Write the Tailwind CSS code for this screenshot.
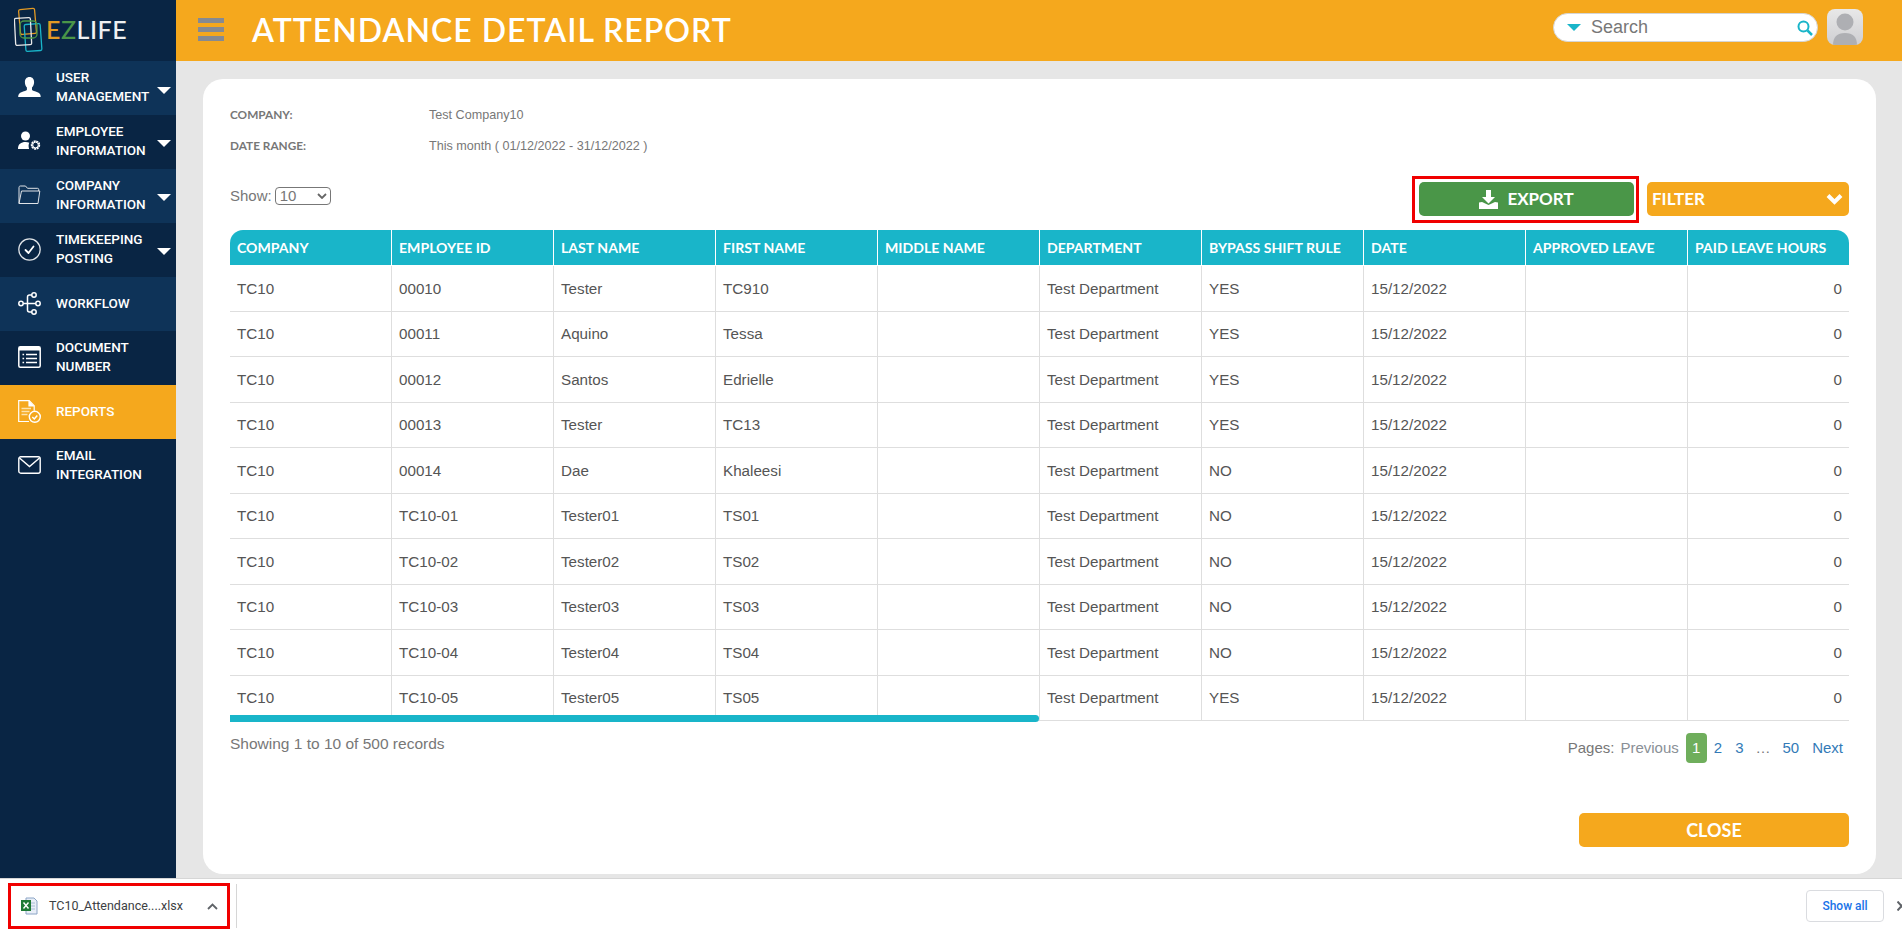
<!DOCTYPE html>
<html lang="en">
<head>
  <meta charset="UTF-8" />
  <title>Attendance Detail Report</title>
  <script src="https://cdn.jsdelivr.net/npm/@tailwindcss/browser@4"></script>
</head>
<body class="h-screen overflow-hidden flex flex-col bg-white font-['Liberation_Sans',sans-serif]">

  <div class="flex h-[878px]">
    <!-- Sidebar -->
    <aside class="w-[176px] shrink-0 bg-[#092544] text-white font-['Roboto',sans-serif] font-medium text-[13.500px] leading-[19px]">
      <div class="h-[61px] flex items-center pl-[14px] pb-[2px]">
        <svg class="w-[30px] h-[46px] shrink-0" viewBox="0 0 30 46" fill="none" stroke-width="1.3">
          <rect x="5.5" y="2" width="16" height="25" rx="1.5" stroke="#e39a24" transform="rotate(-5 13 14)" />
          <rect x="11" y="17" width="16" height="27" rx="1.5" stroke="#19b5c9" transform="rotate(-4 19 30)" />
          <rect x="1" y="11" width="16" height="27" rx="1.5" stroke="#e8e8e8" transform="rotate(-3 9 24)" />
          <rect x="6" y="14" width="17" height="17" rx="4" stroke="#4a9648" />
        </svg>
        <span class="ml-[2px] font-['Lato',sans-serif] text-[25px] leading-none tracking-[0.5px] font-medium"><span class="text-[#e39a24]">E</span><span class="text-[#4a9648]">Z</span><span class="text-[#eef0f2]">LIFE</span></span>
      </div>
      <nav>
        <a class="h-[54px] pb-[2px] flex items-center bg-[#0e3358] relative">
          <span class="w-[56px] shrink-0 pl-[18px]">
            <svg class="w-[23px] h-[23px]" viewBox="0 0 23 23" fill="#fff"><path d="M11.5 1c3 0 4.600 2.200 4.600 5.200 0 2.200-.9 4.200-2.100 5.300v2.300c0 1 5.500 2 7.500 3.700.9.800 1.200 2.300 1.200 3.500H.2c0-1.200.3-2.700 1.200-3.500 2-1.700 7.500-2.700 7.500-3.700v-2.300C7.700 10.400 6.900 8.400 6.900 6.200 6.900 3.200 8.500 1 11.500 1z"/></svg>
          </span>
          <span>USER<br />MANAGEMENT</span>
          <span class="absolute right-[5px] top-[26px] w-0 h-0 border-x-[7.500px] border-x-transparent border-t-[7px] border-t-white"></span>
        </a>
        <a class="h-[54px] pb-[2px] flex items-center relative">
          <span class="w-[56px] shrink-0 pl-[18px]">
            <svg class="w-[23px] h-[20px]" viewBox="0 0 23 20" fill="#fff"><circle cx="7.500" cy="5" r="4.500"/><path d="M0 18c0-5 3-7 7.500-7 1.500 0 2.800.2 3.800.8-.8 1.300-1 3.700-.2 6.200z"/><circle cx="17.500" cy="14" r="3.800" fill="none" stroke="#fff" stroke-width="1.800" stroke-dasharray="2 .6"/><circle cx="17.500" cy="14" r="2.800" fill="none" stroke="#fff" stroke-width="1"/></svg>
          </span>
          <span>EMPLOYEE<br />INFORMATION</span>
          <span class="absolute right-[5px] top-[25px] w-0 h-0 border-x-[7.500px] border-x-transparent border-t-[7px] border-t-white"></span>
        </a>
        <a class="h-[54px] pb-[2px] flex items-center bg-[#0e3358] relative">
          <span class="w-[56px] shrink-0 pl-[18px]">
            <svg class="w-[23px] h-[20px]" viewBox="0 0 23 20" fill="none" stroke="#dfe3e7" stroke-width="1"><path d="M1 18.500V2.500c0-.8.500-1.500 1.300-1.500h5.200l2 2.300h10c.8 0 1.200.5 1.200 1.200v1.500"/><path d="M3.500 6h18.300l-1.800 12.500H1z"/></svg>
          </span>
          <span>COMPANY<br />INFORMATION</span>
          <span class="absolute right-[5px] top-[25px] w-0 h-0 border-x-[7.500px] border-x-transparent border-t-[7px] border-t-white"></span>
        </a>
        <a class="h-[54px] pb-[2px] flex items-center relative">
          <span class="w-[56px] shrink-0 pl-[18px]">
            <svg class="w-[23px] h-[23px]" viewBox="0 0 23 23" fill="none" stroke="#dfe3e7"><circle cx="11.500" cy="11.500" r="10.700" stroke-width="1.300"/><path d="M7.500 12l3 3 5-6.500" stroke="#fff" stroke-width="1.800" stroke-linecap="round" stroke-linejoin="round"/></svg>
          </span>
          <span>TIMEKEEPING<br />POSTING</span>
          <span class="absolute right-[5px] top-[25px] w-0 h-0 border-x-[7.500px] border-x-transparent border-t-[7px] border-t-white"></span>
        </a>
        <a class="h-[54px] pb-[2px] flex items-center bg-[#0e3358]">
          <span class="w-[56px] shrink-0 pl-[18px]">
            <svg class="w-[23px] h-[23px]" viewBox="0 0 23 23" fill="none" stroke="#fff" stroke-width="1.500"><circle cx="3" cy="11.500" r="2.200"/><circle cx="16" cy="3" r="2.200"/><circle cx="20" cy="11.500" r="2.200"/><circle cx="16" cy="20" r="2.200"/><path d="M5.200 11.500h12.600M13.800 3H11.500c-1.500 0-2 1-2 2v13c0 1 .5 2 2 2h2.300"/></svg>
          </span>
          <span>WORKFLOW</span>
        </a>
        <a class="h-[54px] pb-[2px] flex items-center">
          <span class="w-[56px] shrink-0 pl-[18px]">
            <svg class="w-[23px] h-[22px]" viewBox="0 0 23 22" fill="none"><rect x=".8" y=".8" width="21.400" height="20.400" rx="1.500" stroke="#fff" stroke-width="1.500"/><path d="M1 1h21v3.500H1z" fill="#fff"/><path d="M4.500 8.500h1.600M4.500 12.500h1.600M4.500 16.500h1.600M8 8.500h11M8 12.500h11M8 16.500h11" stroke="#fff" stroke-width="1.500"/></svg>
          </span>
          <span>DOCUMENT<br />NUMBER</span>
        </a>
        <a class="h-[54px] pb-[2px] flex items-center bg-[#f5a81d]">
          <span class="w-[56px] shrink-0 pl-[18px]">
            <svg class="w-[23px] h-[23px]" viewBox="0 0 23 23" fill="none" stroke="#fff" stroke-width="1.200"><path d="M11 21.500H.7V.7h10.500l5 5v5"/><path d="M11 .7v5.300h5.200" fill="#fff"/><path d="M3.500 8.500h9.500M3.500 11.500h8M3.500 14.500h6" stroke="#fde3ad" stroke-width="1.400"/><circle cx="16.800" cy="16.800" r="5.500" stroke-width="1.400"/><path d="M14.300 17l2 2 3-3.500" stroke-width="1.500"/></svg>
          </span>
          <span>REPORTS</span>
        </a>
        <a class="h-[54px] pb-[2px] flex items-center">
          <span class="w-[56px] shrink-0 pl-[18px]">
            <svg class="w-[23px] h-[18px]" viewBox="0 0 23 18" fill="none" stroke="#fff" stroke-width="1.400"><rect x=".8" y=".8" width="21.400" height="16.400" rx="2"/><path d="M1.500 2l10 8.500 10-8.500"/></svg>
          </span>
          <span>EMAIL<br />INTEGRATION</span>
        </a>
      </nav>
    </aside>

    <div class="flex-1 min-w-0 flex flex-col bg-[#e6e6e6]">
      <!-- Header -->
      <header class="h-[61px] shrink-0 bg-[#f5a81d] flex items-center">
        <button class="ml-[22px] mb-[2px] w-[26px] flex flex-col gap-[4px]">
          <span class="block h-[5px] bg-[#868a91]"></span>
          <span class="block h-[5px] bg-[#868a91]"></span>
          <span class="block h-[5px] bg-[#868a91]"></span>
        </button>
        <h1 class="ml-[28px] mb-[2px] font-['Lato',sans-serif] font-semibold text-[32px] tracking-[1px] text-white">ATTENDANCE DETAIL REPORT</h1>
        <div class="ml-auto mb-[6px] w-[265px] h-[29px] rounded-full bg-white border border-[#d5d5d5] flex items-center pl-[13px] pr-[2px]">
          <span class="w-0 h-0 border-x-[7px] border-x-transparent border-t-[7px] border-t-[#19b5c9]"></span>
          <span class="ml-[10px] text-[18px] text-[#777]">Search</span>
          <svg class="ml-auto mr-[2px] w-[16px] h-[16px]" viewBox="0 0 16 16" fill="none" stroke="#19b5c9"><circle cx="6.500" cy="6.500" r="5" stroke-width="2"/><path d="M10.500 10.500l4.500 4.500" stroke-width="2.500"/></svg>
        </div>
        <div class="ml-[9px] mr-[39px] mb-[7px] w-[36px] h-[36px] rounded-[8px] overflow-hidden bg-gradient-to-b from-[#e8e8e8] to-[#cfcfd2]">
          <svg viewBox="0 0 36 36" fill="#aeafb3"><circle cx="18" cy="13" r="8.500"/><path d="M6 36c0-8 4-12 12-12s12 4 12 12z"/></svg>
        </div>
      </header>

      <main class="flex-1 min-h-0 pt-[18px] pl-[27px] pr-[26px] pb-[4px]">
        <div class="h-full bg-white rounded-[20px] px-[27px] pt-[26px]">
          <!-- Report info -->
          <div class="flex items-center h-[20px] text-[12.600px] text-[#777]">
            <span class="w-[199px] font-['Lato',sans-serif] font-bold text-[11.800px]">COMPANY:</span>
            <span>Test Company10</span>
          </div>
          <div class="flex items-center h-[20px] mt-[11px] text-[12.600px] text-[#777]">
            <span class="w-[199px] font-['Lato',sans-serif] font-bold text-[11.800px]">DATE RANGE:</span>
            <span>This month ( 01/12/2022 - 31/12/2022 )</span>
          </div>

          <!-- Toolbar -->
          <div class="mt-[20px] flex items-start">
            <div class="mt-[9px] flex items-center text-[15px] text-[#777]">
              <span>Show:</span>
              <span class="ml-[3px] w-[56px] h-[18px] border border-[#777] rounded-[4px] flex items-center pl-[4px]">
                10
                <svg class="ml-auto mr-[3px] w-[10px] h-[6px]" viewBox="0 0 10 6" fill="none" stroke="#666" stroke-width="1.800"><path d="M1 1l4 4 4-4"/></svg>
              </span>
            </div>
            <div class="ml-auto border-[3px] border-[#f00000] pl-[4px] pr-[2px] pt-[3px] pb-[4px]">
              <button class="w-[215px] h-[34px] rounded-[5px] bg-[#4a9648] text-white font-['Lato',sans-serif] font-bold text-[17px] flex items-center justify-center gap-[9px]">
                <svg class="w-[19px] h-[19px]" viewBox="0 0 19 19" fill="#fff"><path d="M7 0h5v7h4l-6.500 6.500L3 7h4z"/><path d="M0 12.500l3-.5 6.500 3 6.500-3 3 .5V19H0z"/></svg>
                EXPORT
              </button>
            </div>
            <button class="ml-[8px] mt-[6px] w-[202px] h-[34px] rounded-[5px] bg-[#f5a81d] text-white font-['Lato',sans-serif] font-bold text-[17px] flex items-center justify-between pl-[5px] pr-[6px]">
              FILTER
              <svg class="w-[17px] h-[12px]" viewBox="0 0 17 12" fill="none" stroke="#fff" stroke-width="4"><path d="M2 2.500l6.500 6.500 6.500-6.500"/></svg>
            </button>
          </div>

          <!-- Table -->
          <div class="relative mt-[7px]">
            <table class="w-[1619px] table-fixed border-separate border-spacing-0 text-[15.200px] text-[#555] [&_th]:w-[162px] [&_th]:h-[36px] [&_th]:px-[7px] [&_th]:text-left [&_th]:text-white [&_th]:font-bold [&_th]:font-['Lato',sans-serif] [&_th]:text-[14.100px] [&_th]:border-r [&_th]:border-b [&_th]:border-r-white [&_th]:border-b-white [&_th]:bg-[#19b5c9] [&_th]:whitespace-nowrap [&_td]:h-[45.500px] [&_td]:px-[7px] [&_td]:pt-[2px] [&_td]:border-b [&_td]:border-r [&_td]:border-[#dedede]">
              <thead>
                <tr>
                  <th class="rounded-tl-[13px]">COMPANY</th><th>EMPLOYEE ID</th><th>LAST NAME</th><th>FIRST NAME</th><th>MIDDLE NAME</th><th>DEPARTMENT</th><th>BYPASS SHIFT RULE</th><th>DATE</th><th>APPROVED LEAVE</th><th class="!w-auto rounded-tr-[13px] !border-r-0">PAID LEAVE HOURS</th>
                </tr>
              </thead>
              <tbody class="[&_td:last-child]:border-r-0 [&_td:last-child]:text-right">
                <tr><td>TC10</td><td>00010</td><td>Tester</td><td>TC910</td><td></td><td>Test Department</td><td>YES</td><td>15/12/2022</td><td></td><td>0</td></tr>
                <tr><td>TC10</td><td>00011</td><td>Aquino</td><td>Tessa</td><td></td><td>Test Department</td><td>YES</td><td>15/12/2022</td><td></td><td>0</td></tr>
                <tr><td>TC10</td><td>00012</td><td>Santos</td><td>Edrielle</td><td></td><td>Test Department</td><td>YES</td><td>15/12/2022</td><td></td><td>0</td></tr>
                <tr><td>TC10</td><td>00013</td><td>Tester</td><td>TC13</td><td></td><td>Test Department</td><td>YES</td><td>15/12/2022</td><td></td><td>0</td></tr>
                <tr><td>TC10</td><td>00014</td><td>Dae</td><td>Khaleesi</td><td></td><td>Test Department</td><td>NO</td><td>15/12/2022</td><td></td><td>0</td></tr>
                <tr><td>TC10</td><td>TC10-01</td><td>Tester01</td><td>TS01</td><td></td><td>Test Department</td><td>NO</td><td>15/12/2022</td><td></td><td>0</td></tr>
                <tr><td>TC10</td><td>TC10-02</td><td>Tester02</td><td>TS02</td><td></td><td>Test Department</td><td>NO</td><td>15/12/2022</td><td></td><td>0</td></tr>
                <tr><td>TC10</td><td>TC10-03</td><td>Tester03</td><td>TS03</td><td></td><td>Test Department</td><td>NO</td><td>15/12/2022</td><td></td><td>0</td></tr>
                <tr><td>TC10</td><td>TC10-04</td><td>Tester04</td><td>TS04</td><td></td><td>Test Department</td><td>NO</td><td>15/12/2022</td><td></td><td>0</td></tr>
                <tr><td>TC10</td><td>TC10-05</td><td>Tester05</td><td>TS05</td><td></td><td>Test Department</td><td>YES</td><td>15/12/2022</td><td></td><td>0</td></tr>
              </tbody>
            </table>
            <!-- overlay scrollbar -->
            <div class="absolute left-0 top-[485px] w-[809px] h-[7px] rounded-r-full bg-[#19b5c9]"></div>
          </div>

          <!-- Table footer -->
          <div class="mt-[12px] h-[30px] flex items-start justify-between text-[15px]">
            <span class="text-[#777] text-[15.500px] -mt-[1px]">Showing 1 to 10 of 500 records</span>
            <div class="h-[30px] flex items-center pr-[6px]">
              <span class="text-[#777]">Pages:</span>
              <span class="ml-[6px] text-[#8a8f96]">Previous</span>
              <span class="ml-[7px] w-[21px] h-[30px] rounded-[4px] bg-[#6fae5c] text-white flex items-center justify-center">1</span>
              <span class="ml-[7px] text-[#337ab7]">2</span>
              <span class="ml-[13px] text-[#337ab7]">3</span>
              <span class="ml-[12px] text-[#777]">…</span>
              <span class="ml-[12px] text-[#337ab7]">50</span>
              <span class="ml-[13px] text-[#337ab7]">Next</span>
            </div>
          </div>

          <div class="mt-[50px] flex justify-end">
            <button class="w-[270px] h-[34px] rounded-[5px] bg-[#f5a81d] text-white font-['Lato',sans-serif] font-bold text-[18px]">CLOSE</button>
          </div>
        </div>
      </main>
    </div>
  </div>

  <!-- Download bar -->
  <div class="h-[55px] shrink-0 bg-white border-t border-[#d6d6d6] flex items-center font-['Roboto',sans-serif] text-[12px] overflow-hidden">
    <div class="ml-[8px] w-[222px] h-[46px] border-[3px] border-[#f00000] flex items-center pl-[10px] text-[#444]">
      <svg class="w-[17px] h-[18px] shrink-0" viewBox="0 0 17 18"><path d="M5 1h8l3 3v13H5z" fill="#e8eef7" stroke="#8ca5c6"/><path d="M8 6h6M8 9h6M8 12h6" stroke="#a9bcd6"/><rect x="0" y="3" width="10" height="11" fill="#1e7a35"/><path d="M2.500 5.500l5 6M7.500 5.500l-5 6" stroke="#fff" stroke-width="1.400"/></svg>
      <span class="ml-[11px] text-[12.500px] text-[#3c4043]">TC10_Attendance....xlsx</span>
      <svg class="ml-auto mr-[9px] w-[11px] h-[7px]" viewBox="0 0 11 7" fill="none" stroke="#5f6368" stroke-width="1.800"><path d="M1 6l4.500-4.500L10 6"/></svg>
    </div>
    <span class="ml-[6px] w-px h-[44px] bg-[#d6d6d6]"></span>
    <button class="ml-auto w-[78px] h-[32px] rounded-[4px] border border-[#dadce0] text-[#1a73e8] font-medium">Show all</button>
    <svg class="ml-[13px] -mr-[4px] w-[9px] h-[10px] shrink-0" viewBox="0 0 9 10" fill="none" stroke="#5f6368" stroke-width="2"><path d="M.5.500l8 9M8.500.500l-8 9"/></svg>
  </div>

</body>
</html>
